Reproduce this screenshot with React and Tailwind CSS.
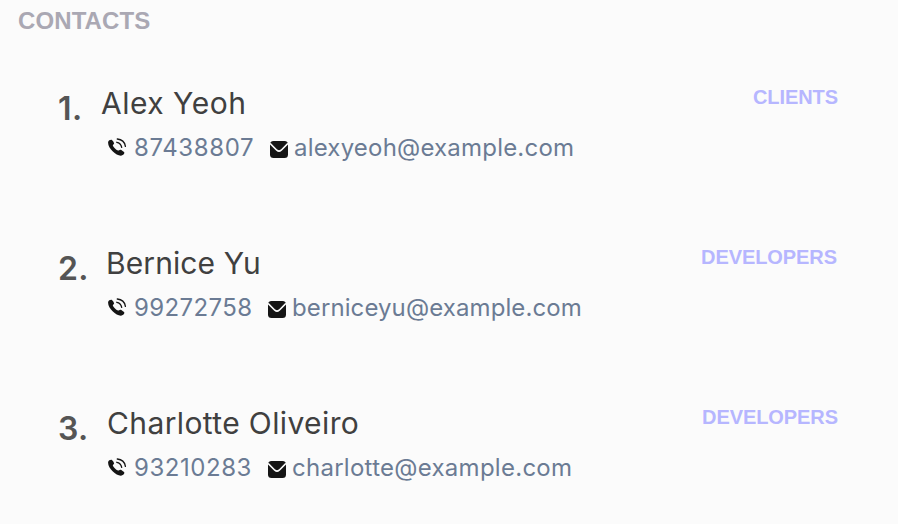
const contacts = [
  { id: 1, name: "Alex Yeoh", phone: "87438807", email: "alexyeoh@example.com", tag: "CLIENTS", tagClass: "pr-0", nameClass: "-ml-px tracking-[0.5px]", phoneClass: "w-[136px] tracking-[0.6px]", emailClass: "ml-[6px] tracking-[0.2px]" },
  { id: 2, name: "Bernice Yu", phone: "99272758", email: "berniceyu@example.com", tag: "DEVELOPERS", tagClass: "pr-px", nameClass: "pl-[4px] tracking-[0.1px]", phoneClass: "w-[134px] tracking-[0.4px]", emailClass: "ml-[6px] tracking-[0.1px]" },
  { id: 3, name: "Charlotte Oliveiro", phone: "93210283", email: "charlotte@example.com", tag: "DEVELOPERS", tagClass: "pr-0", nameClass: "pl-[5px] tracking-[0.38px]", phoneClass: "w-[134px] tracking-[0.55px]", emailClass: "ml-[6px] tracking-[0.27px]" },
];

function PhoneIcon() {
  return (
    <svg width="18" height="18" viewBox="0 0 18 18" className="relative -top-px block shrink-0">
      <path d="M0.2 3.7 C0.6 2.2 2.7 1.4 3.9 1.9 C4.8 2.4 6.2 4.7 6.1 5.6 C6 6.5 4.7 6.8 4.8 7.6 C5.2 9.1 8.1 12 9.8 12.5 C10.8 12.8 11.4 11.6 12.3 11.7 C13.4 11.8 16.2 13.7 16.4 14.7 C16.5 16 14.5 17.6 13 17.7 C8 18 -1 9.5 0.2 3.7Z" fill="#151515" />
      <path d="M8.8 4.3 C11.3 4.7 13.2 6.7 13.7 9.3 M9.3 1 C13.6 1.4 16.8 4.4 17.4 8.4" fill="none" stroke="#151515" strokeWidth="1.35" strokeLinecap="round" />
    </svg>
  );
}

function MailIcon() {
  return (
    <svg width="18" height="17" viewBox="0 0 18 17" className="relative top-px block shrink-0">
      <rect width="18" height="17" rx="3.5" fill="#151515" />
      <path d="M0 2.4 L6.8 9.2 Q9 11.2 11.2 9.2 L18 2.4" fill="none" stroke="#fbfbfb" strokeWidth="1.6" />
    </svg>
  );
}

export default function App() {
  return (
    <main className="h-[524px] w-[898px] overflow-hidden bg-[#fbfbfb] font-['Inter',sans-serif] antialiased">
      <h1 className="h-[73px] pt-[7px] pl-[18px] font-['Liberation_Sans',Arial,sans-serif] text-[24px] leading-[28px] font-bold tracking-[0.1px] text-[#aaa8b3]">CONTACTS</h1>
      {contacts.map((c) => (
        <section key={c.id} className="flex h-[160px] pl-[58px] pr-[60px]">
          <div className="w-[44px] pt-[16px] text-[32px] leading-[40px] font-semibold tracking-[0.4px] text-[#555]">{c.id}.</div>
          <div className="flex-1 pt-[10px]">
            <div className={`text-[30px] leading-[40px] text-[#404040] ${c.nameClass}`}>{c.name}</div>
            <div className="flex h-[50px] items-center pl-[6px] text-[24px] text-[#6b7b94]">
              <PhoneIcon />
              <span className={`pl-[8px] ${c.phoneClass}`}>{c.phone}</span>
              <div className="ml-[8px]"><MailIcon /></div>
              <span className={c.emailClass}>{c.email}</span>
            </div>
          </div>
          <div className={`pt-[12px] font-['Liberation_Sans',Arial,sans-serif] text-[20px] leading-[24px] font-bold tracking-[-0.08px] text-[#b6b6ff] ${c.tagClass}`}>{c.tag}</div>
        </section>
      ))}
    </main>
  );
}
